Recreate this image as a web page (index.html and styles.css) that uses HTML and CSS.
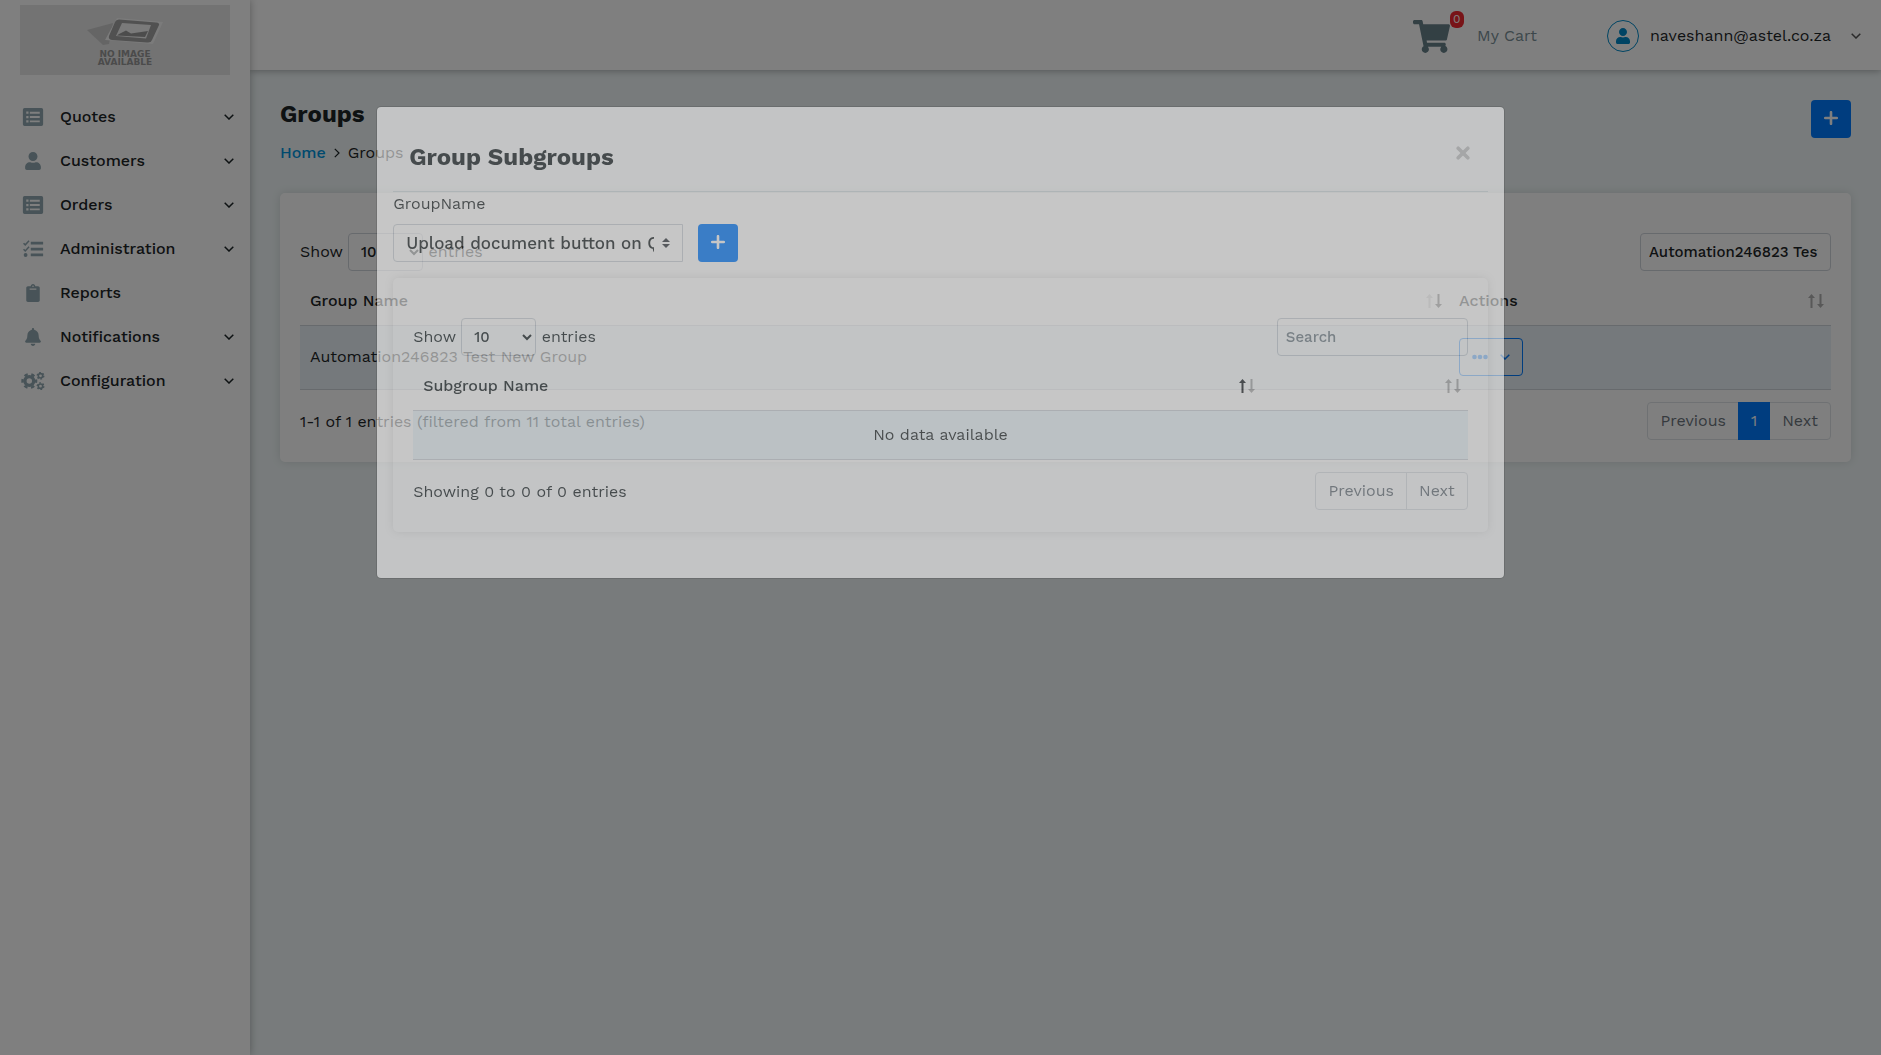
FILE: index.html
```html
<!DOCTYPE html>
<html lang="en">
<head>
<meta charset="utf-8">
<title>Groups</title>
<meta name="viewport" content="width=device-width, initial-scale=1">
<link rel="stylesheet" href="styles.css">
</head>
<body>
<svg class="defs" aria-hidden="true">
  <symbol id="i-list" viewBox="0 0 18 16"><path fill-rule="evenodd" d="M1.500 0h15A1.500 1.500 0 0 1 18 1.500v13a1.500 1.500 0 0 1-1.500 1.500h-15A1.500 1.500 0 0 1 0 14.500v-13A1.500 1.500 0 0 1 1.500 0zM3 3.200v2h2v-2zM3 7v2h2V7zM3 10.800v2h2v-2zM6.200 3.400v1.600h8.800V3.400zM6.200 7.200v1.600h8.800V7.200zM6.200 11v1.600h8.800V11z"/></symbol>
  <symbol id="i-user" viewBox="0 0 448 512"><path d="M224 256c70.700 0 128-57.300 128-128S294.700 0 224 0 96 57.300 96 128s57.300 128 128 128zm89.600 32h-16.700c-22.200 10.200-46.900 16-72.900 16s-50.600-5.800-72.900-16h-16.700C60.200 288 0 348.200 0 422.400V464c0 26.500 21.500 48 48 48h352c26.500 0 48-21.500 48-48v-41.600c0-74.200-60.200-134.400-134.400-134.400z"/></symbol>
  <symbol id="i-tasks" viewBox="0 0 18 16"><path d="M7 1.500h11v2.500H7zM7 6.800h11v2.500H7zM7 12h11v2.500H7z"/><circle cx="2.400" cy="13.300" r="1.700"/><path d="M.6 2.800l1.500 1.500L5.500.7M.6 8.200l1.500 1.500L5.500 6.100" fill="none" stroke="currentColor" stroke-width="1.300"/></symbol>
  <symbol id="i-clip" viewBox="0 0 384 512"><path fill-rule="evenodd" d="M336 64h-80c0-35.300-28.700-64-64-64s-64 28.700-64 64H48C21.500 64 0 85.500 0 112v352c0 26.500 21.500 48 48 48h288c26.500 0 48-21.500 48-48V112c0-26.500-21.500-48-48-48zM192 40c13.300 0 24 10.700 24 24s-10.700 24-24 24-24-10.700-24-24 10.700-24 24-24zm96 114c0 3.300-2.700 6-6 6H102c-3.300 0-6-2.700-6-6v-20c0-3.300 2.700-6 6-6h180c3.300 0 6 2.700 6 6v20z"/></symbol>
  <symbol id="i-bell" viewBox="0 0 448 512"><path d="M224 512c35.320 0 63.970-28.650 63.970-64H160.030c0 35.350 28.650 64 63.970 64zm215.390-149.710c-19.320-20.760-55.470-51.990-55.470-154.290 0-77.700-54.480-139.900-127.940-155.160V32c0-17.670-14.320-32-31.980-32s-31.980 14.330-31.980 32v20.840C118.560 68.100 64.080 130.300 64.080 208c0 102.300-36.150 133.530-55.470 154.290-6 6.450-8.660 14.160-8.610 21.710.11 16.400 12.980 32 32.100 32h383.800c19.120 0 32-15.600 32.100-32 .05-7.550-2.610-15.270-8.610-21.710z"/></symbol>
  <symbol id="i-cogs" viewBox="0 0 23 18"><g fill="none" stroke="currentColor"><circle cx="7.800" cy="9" r="4.400" stroke-width="3.400"/><circle cx="7.800" cy="9" r="6.800" stroke-width="2.400" stroke-dasharray="3.560 3.560" stroke-dashoffset="1.780"/><circle cx="19" cy="3.800" r="2.200" stroke-width="1.600"/><circle cx="19" cy="3.800" r="3.300" stroke-width="1.400" stroke-dasharray="1.730 1.730"/><circle cx="19" cy="14.200" r="2.200" stroke-width="1.600"/><circle cx="19" cy="14.200" r="3.300" stroke-width="1.400" stroke-dasharray="1.730 1.730"/></g></symbol>
  <symbol id="i-cart" viewBox="0 0 576 512"><path d="M528.120 301.319l47.273-208C578.806 78.301 567.391 64 551.990 64H159.208l-9.166-44.810C147.758 8.021 137.930 0 126.529 0H24C10.745 0 0 10.745 0 24v16c0 13.255 10.745 24 24 24h69.883l70.248 343.435C147.325 417.100 136 435.222 136 456c0 30.928 25.072 56 56 56s56-25.072 56-56c0-15.674-6.447-29.835-16.824-40h209.647C430.447 426.165 424 440.326 424 456c0 30.928 25.072 56 56 56s56-25.072 56-56c0-22.172-12.888-41.332-31.579-50.405l5.517-24.276c3.413-15.018-8.002-29.319-23.403-29.319H218.117l-6.545-32h293.145c11.206 0 20.920-7.754 23.403-18.681z"/></symbol>
  <symbol id="i-plus" viewBox="0 0 14 14"><path d="M7 1.200v11.600M1.200 7h11.600" fill="none" stroke="currentColor" stroke-width="2.600" stroke-linecap="round"/></symbol>
  <symbol id="i-times" viewBox="0 0 14 14"><path d="M2.200 2.200l9.600 9.600M11.800 2.200L2.200 11.800" fill="none" stroke="currentColor" stroke-width="3.600" stroke-linecap="round"/></symbol>
  <symbol id="i-down" viewBox="0 0 10 6"><path d="M.7.700L5 5 9.300.7" fill="none" stroke="currentColor" stroke-width="1.500"/></symbol>
  <symbol id="i-next" viewBox="0 0 6 10"><path d="M.8.800L5 5 .8 9.200" fill="none" stroke="currentColor" stroke-width="1.200"/></symbol>
  <symbol id="i-up-arrow" viewBox="0 0 7 14"><path d="M2.500 14V4H0L3.500 0 7 4H4.500v10z"/></symbol>
  <symbol id="i-down-arrow" viewBox="0 0 7 14"><path d="M2.500 0v10H0l3.500 4L7 10H4.500V0z"/></symbol>
  <symbol id="i-dots" viewBox="0 0 16 6"><circle cx="2.500" cy="3" r="2.300"/><circle cx="8" cy="3" r="2.300"/><circle cx="13.500" cy="3" r="2.300"/></symbol>
</svg>

<div class="app">
  <aside class="sidebar">
    <div class="logo">
      <svg width="78" height="30" viewBox="0 0 78 30" aria-hidden="true"><path d="M1 13L27 6 23 27 17 28z" fill="#cacaca"/><path d="M31 1L77 5 67 27 19 23z" fill="#f6f6f6"/><path d="M33 2.500L70 5.500Q74 6 73 8L66 23Q65 26 61 25.500L26 23Q22 22.500 23 19L29 5Q30 2.500 33 2.500z" fill="#a2a2a2"/><path d="M36 6L65 8 60 21.500 30 19z" fill="#f4f4f4"/><path d="M33 17L40 13.500 45 16.500 62 14 59 20 31 18.500z" fill="#999"/></svg>
      <span>NO IMAGE<br>AVAILABLE</span>
    </div>
    <nav class="menu">
      <a href="#"><svg class="ic"><use href="#i-list"/></svg><span>Quotes</span><svg class="caret"><use href="#i-down"/></svg></a>
      <a href="#"><svg class="ic"><use href="#i-user"/></svg><span>Customers</span><svg class="caret"><use href="#i-down"/></svg></a>
      <a href="#"><svg class="ic"><use href="#i-list"/></svg><span>Orders</span><svg class="caret"><use href="#i-down"/></svg></a>
      <a href="#"><svg class="ic"><use href="#i-tasks"/></svg><span>Administration</span><svg class="caret"><use href="#i-down"/></svg></a>
      <a href="#"><svg class="ic"><use href="#i-clip"/></svg><span>Reports</span></a>
      <a href="#"><svg class="ic"><use href="#i-bell"/></svg><span>Notifications</span><svg class="caret"><use href="#i-down"/></svg></a>
      <a href="#"><svg class="ic"><use href="#i-cogs"/></svg><span>Configuration</span><svg class="caret"><use href="#i-down"/></svg></a>
    </nav>
  </aside>

  <div class="page">
    <header class="topbar">
      <a class="cart" href="#"><span class="cart-icon"><svg><use href="#i-cart"/></svg><span class="badge">0</span></span>My Cart</a>
      <button class="account" type="button"><span class="avatar"><svg><use href="#i-user"/></svg></span><span class="email">naveshann@astel.co.za</span><svg class="caret"><use href="#i-down"/></svg></button>
    </header>

    <main class="content">
      <div class="heading">
        <div>
          <h1>Groups</h1>
          <nav class="crumbs"><a href="#">Home</a><svg><use href="#i-next"/></svg><span>Groups</span></nav>
        </div>
        <button class="btn add" type="button" aria-label="Add group"><svg><use href="#i-plus"/></svg></button>
      </div>

      <section class="card">
        <div class="tools">
          <label>Show <select class="length"><option>10</option></select> entries</label>
          <input class="search" type="text" aria-label="Search groups" value="Automation246823 Test New Group">
        </div>
        <table>
          <colgroup><col><col class="actions-col"></colgroup>
          <thead><tr>
            <th><div>Group Name<span class="sort desc"><svg><use href="#i-up-arrow"/></svg><svg><use href="#i-down-arrow"/></svg></span></div></th>
            <th><div>Actions<span class="sort"><svg><use href="#i-up-arrow"/></svg><svg><use href="#i-down-arrow"/></svg></span></div></th>
          </tr></thead>
          <tbody><tr>
            <td>Automation246823 Test New Group</td>
            <td><button class="more" type="button" aria-label="Actions"><svg class="dots"><use href="#i-dots"/></svg><svg class="caret"><use href="#i-down"/></svg></button></td>
          </tr></tbody>
        </table>
        <div class="foot">
          <span>1-1 of 1 entries (filtered from 11 total entries)</span>
          <div class="pager"><button type="button">Previous</button><button class="current" type="button">1</button><button type="button">Next</button></div>
        </div>
      </section>
    </main>
  </div>
</div>

<div class="backdrop"></div>

<div class="modal" role="dialog" aria-labelledby="dlg-title">
  <div class="dialog">
    <div class="dialog-head">
      <h2 id="dlg-title">Group Subgroups</h2>
      <button class="close" type="button" aria-label="Close"><svg><use href="#i-times"/></svg></button>
    </div>
    <label class="field-label" for="group-name">GroupName</label>
    <div class="field">
      <select id="group-name"><option>Upload document button on Quotes</option></select>
      <button class="btn" type="button" aria-label="Add subgroup"><svg><use href="#i-plus"/></svg></button>
    </div>
    <section class="card">
      <div class="tools">
        <label>Show <select class="length"><option>10</option></select> entries</label>
        <input class="search" type="text" aria-label="Search subgroups" placeholder="Search">
      </div>
      <table>
        <colgroup><col><col class="blank-col"></colgroup>
        <thead><tr>
          <th><div>Subgroup Name<span class="sort asc"><svg><use href="#i-up-arrow"/></svg><svg><use href="#i-down-arrow"/></svg></span></div></th>
          <th><div><span class="sort"><svg><use href="#i-up-arrow"/></svg><svg><use href="#i-down-arrow"/></svg></span></div></th>
        </tr></thead>
        <tbody><tr><td class="empty" colspan="2">No data available</td></tr></tbody>
      </table>
      <div class="foot">
        <span>Showing 0 to 0 of 0 entries</span>
        <div class="pager"><button type="button">Previous</button><button type="button">Next</button></div>
      </div>
    </section>
  </div>
</div>
</body>
</html>
```

FILE: styles.css
```css
* { box-sizing: border-box; }

body {
  margin: 0;
  background: #f0f7f8;
  color: #1c2426;
  font: 400 16px/24px "Work Sans", Inter, "Liberation Sans", sans-serif;
}

button, input, select { font: inherit; color: inherit; margin: 0; }
button { cursor: pointer; }
a { text-decoration: none; color: inherit; }
svg { display: block; fill: currentColor; flex: none; }
.defs { position: absolute; width: 0; height: 0; }

.app { display: flex; min-height: 100vh; }

/* Sidebar */
.sidebar {
  flex: 0 0 250px;
  z-index: 1;
  background: #fff;
  box-shadow: 0 0 8px rgba(0, 0, 0, .3);
}
.logo {
  display: flex;
  flex-direction: column;
  align-items: center;
  height: 70px;
  margin: 5px 20px 20px;
  padding-top: 12px;
  background: #e6e6e6;
  color: #969696;
  font: 700 9px/8px "DejaVu Sans", sans-serif;
  text-align: center;
}
.logo span { padding-top: 3px; }
.menu a {
  display: flex;
  align-items: center;
  height: 44px;
  padding: 0 16px 0 20px;
  font-weight: 500;
}
.menu .ic { width: 26px; height: 18px; margin-right: 14px; color: #90a7b0; }
.menu .caret { margin-left: auto; }
.caret { width: 10px; height: 6px; }

/* Top bar */
.page { flex: 1; min-width: 0; }
.topbar {
  display: flex;
  align-items: center;
  justify-content: flex-end;
  gap: 70px;
  height: 70px;
  padding: 2px 20px 0;
  background: #fff;
  box-shadow: 0 1px 7px rgba(0, 0, 0, .3);
}
.cart { display: flex; align-items: center; gap: 27px; color: #7a8f97; }
.cart-icon { position: relative; color: #678089; }
.cart-icon svg { width: 37px; height: 33px; }
.badge {
  position: absolute;
  left: 37px;
  top: -9px;
  padding: 0 3px;
  border-radius: 6px;
  background: #f02830;
  color: #fff;
  font-size: 12px;
  line-height: 17px;
}
.account {
  display: flex;
  align-items: center;
  padding: 0;
  border: 0;
  background: none;
}
.account .caret { color: #555; }
.avatar {
  display: grid;
  place-items: center;
  width: 32px;
  height: 32px;
  margin-right: 11px;
  border: 1px solid #0089c8;
  border-radius: 50%;
  color: #0089c8;
}
.avatar svg { width: 14px; height: 16px; }
.email { margin-right: 20px; }

/* Page content */
.content { padding: 30px; }
.heading { display: flex; justify-content: space-between; height: 93px; }
h1, h2 { margin: 0; font-size: 24px; font-weight: 700; }
h1 { line-height: 28px; }
.crumbs { display: flex; align-items: center; gap: 8px; margin-top: 13px; }
.crumbs a { color: #0094dd; font-weight: 500; }
.crumbs svg { width: 6px; height: 10px; }

.btn {
  display: grid;
  place-items: center;
  width: 40px;
  height: 38px;
  padding: 0 0 2px;
  border: 0;
  border-radius: 4px;
  background: #007bff;
  color: #fff;
}
.btn svg { width: 14px; height: 14px; }

.card {
  padding: 40px 20px 22px;
  border-radius: 5px;
  background: #fff;
  box-shadow: 0 0 10px rgba(0, 0, 0, .12);
}
.tools { display: flex; justify-content: space-between; }
.length, .search {
  height: 38px;
  border: 1px solid #ced4da;
  border-radius: 4px;
  background: transparent;
  font-weight: 500;
}
.length { width: 75px; padding: 0 8px; font-size: 15px; }
.search { width: 191px; padding: 0 12px 0 8px; font-size: 15px; }
.search::placeholder { color: #7a858d; opacity: 1; }

table { width: 100%; border-collapse: collapse; table-layout: fixed; }
.actions-col { width: 382px; }
.blank-col { width: 206px; }
th { height: 54px; padding: 6px 7px 0 10px; border-bottom: 1px solid #ced4da; font-weight: 500; text-align: left; }
th div { display: flex; align-items: center; justify-content: space-between; }
.sort { display: flex; gap: 2px; margin-left: auto; color: #b0b0b0; }
.sort svg { width: 7px; height: 14px; }
.desc svg:last-child { color: #555; }
.desc svg:first-child { color: #ccc; }
.asc svg:first-child { color: #212529; }
td { height: 64px; padding: 0 10px; border-bottom: 1px solid #ced4da; background: #ebf3f8; }
.more {
  display: flex;
  align-items: center;
  justify-content: space-between;
  width: 64px;
  height: 38px;
  padding: 0 12px;
  border: 1px solid #007bff;
  border-radius: 4px;
  background: none;
  color: #007bff;
}
.dots { width: 16px; height: 6px; }

.foot { display: flex; justify-content: space-between; align-items: center; margin-top: 12px; }
.foot > span { padding-top: 2px; }
.pager { display: flex; height: 38px; border: 1px solid #dee2e6; border-radius: 4px; }
.pager button { padding: 0 12px; border: 0; background: none; color: #6c757d; }
.pager button + button { border-left: 1px solid #dee2e6; }
.pager .current { margin: -1px 0; padding: 0 13px; border: 0; background: #007bff; color: #fff; }
.pager .current + button { border: 0; }

/* Dialog, half way through its fade */
.backdrop { position: fixed; inset: 0; z-index: 2; background: rgba(0, 0, 0, .5); }
.modal { position: fixed; inset: 0; z-index: 3; padding-top: 106px; opacity: .55; }
.dialog {
  width: 60%;
  margin: 0 auto;
  padding: 16px 16px 46px;
  border: 1px solid rgba(0, 0, 0, .2);
  border-radius: 5px;
  background: #fff;
  background-clip: padding-box;
}
.dialog-head {
  display: flex;
  justify-content: space-between;
  height: 69px;
  padding: 18px 16px 0;
  border-bottom: 1px solid #dee6ea;
}
h2 { line-height: 32px; }
.close { align-self: flex-start; padding: 5px 2px; border: 0; background: none; color: #c8c8c8; }
.close svg { width: 14px; height: 14px; }
.field-label { display: block; }
.field { display: flex; gap: 15px; margin: 8px 0 16px; }
#group-name {
  appearance: none;
  width: 290px;
  height: 38px;
  padding: 0 28px 0 12px;
  border: 1px solid #ced4da;
  border-radius: 4px 0 0 4px;
  background: url("data:image/svg+xml,%3Csvg xmlns='http://www.w3.org/2000/svg' viewBox='0 0 4 5'%3E%3Cpath fill='%23343a40' d='M2 0L0 2h4zm0 5L0 3h4z'/%3E%3C/svg%3E") no-repeat right 12px center / 8px 10px;
  font-size: 17px;
  font-weight: 500;
}
.modal td { height: 49px; }
.modal .empty { text-align: center; background: #ecf6fb; }
```
